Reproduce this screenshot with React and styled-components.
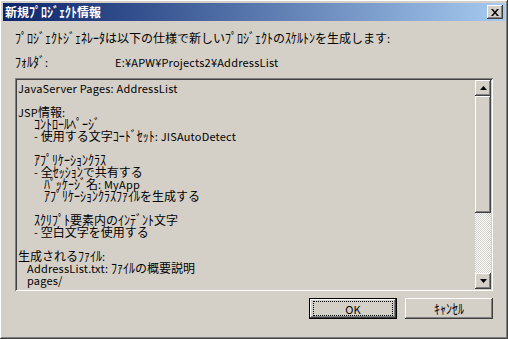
import React from 'react';
import styled, { createGlobalStyle } from 'styled-components';

const GlobalStyle = createGlobalStyle`
  html, body {
    margin: 0;
    padding: 0;
    background: #d4d0c8;
  }
  body {
    font-family: "Noto Sans CJK JP", sans-serif;
    font-size: 12px;
  }
`;

const lines = [
  { text: 'JavaServer Pages: AddressList', indent: 0 },
  { text: '', indent: 0 },
  { text: 'JSP情報:', indent: 0 },
  { text: 'ｺﾝﾄﾛｰﾙﾍﾟｰｼﾞ', indent: 16 },
  { text: '- 使用する文字ｺｰﾄﾞｾｯﾄ: JISAutoDetect', indent: 16 },
  { text: '', indent: 0 },
  { text: 'ｱﾌﾟﾘｹｰｼｮﾝｸﾗｽ', indent: 16 },
  { text: '- 全ｾｯｼｮﾝで共有する', indent: 16 },
  { text: 'ﾊﾟｯｹｰｼﾞ名: MyApp', indent: 26 },
  { text: 'ｱﾌﾟﾘｹｰｼｮﾝｸﾗｽﾌｧｲﾙを生成する', indent: 26 },
  { text: '', indent: 0 },
  { text: 'ｽｸﾘﾌﾟﾄ要素内のｲﾝﾃﾞﾝﾄ文字', indent: 16 },
  { text: '- 空白文字を使用する', indent: 16 },
  { text: '', indent: 0 },
  { text: '生成されるﾌｧｲﾙ:', indent: 0 },
  { text: 'AddressList.txt: ﾌｧｲﾙの概要説明', indent: 9 },
  { text: 'pages/', indent: 9 },
];

// latin runs get the narrower size of the old UI font, half-width kana a little taller
const Txt = ({ children }) => {
  const parts = String(children).split(/([\uFF61-\uFF9F]+|[\x20-\x7E\u00A5]+)/).filter(Boolean);
  return parts.map((p, i) => {
    if (/^[\uFF61-\uFF9F]/.test(p)) return <Kana key={i}>{p}</Kana>;
    if (/^[\x20-\x7E\u00A5]/.test(p)) return <Latin key={i}>{p}</Latin>;
    return <span key={i}>{p}</span>;
  });
};

const App = () => {
  return (
    <>
      <GlobalStyle />
      <Window>
        <TitleBar>
          <Title><Txt>新規ﾌﾟﾛｼﾞｪｸﾄ情報</Txt></Title>
          <CloseButton>
            <svg width="8" height="7" viewBox="0 0 8 7">
              <path d="M0 0h2l2 2.5L6 0h2L5 3.5 8 7H6L4 4.5 2 7H0l3-3.5z" fill="#000" />
            </svg>
          </CloseButton>
        </TitleBar>
        <Body>
          <Intro><Txt>ﾌﾟﾛｼﾞｪｸﾄｼﾞｪﾈﾚｰﾀは以下の仕様で新しいﾌﾟﾛｼﾞｪｸﾄのｽｹﾙﾄﾝを生成します:</Txt></Intro>
          <FolderRow>
            <FolderLabel><Txt>ﾌｫﾙﾀﾞ:</Txt></FolderLabel>
            <span><Txt>E:¥APW¥Projects2¥AddressList</Txt></span>
          </FolderRow>
          <Summary>
            <SummaryText>
              {lines.map((l, i) => (
                <Line key={i} $indent={l.indent}><Txt>{l.text}</Txt></Line>
              ))}
            </SummaryText>
            <ScrollBar>
              <ArrowButton>
                <svg width="7" height="4" viewBox="0 0 7 4"><path d="M3.5 0L7 4H0z" fill="#000" /></svg>
              </ArrowButton>
              <Thumb />
              <Track />
              <ArrowButton>
                <svg width="7" height="4" viewBox="0 0 7 4"><path d="M0 0h7L3.5 4z" fill="#000" /></svg>
              </ArrowButton>
            </ScrollBar>
          </Summary>
          <ButtonRow>
            <Button $default>
              <Focus><Txt>OK</Txt></Focus>
            </Button>
            <Button><Txt>ｷｬﾝｾﾙ</Txt></Button>
          </ButtonRow>
        </Body>
      </Window>
    </>
  );
};

const raised = `
  box-shadow:
    inset -1px -1px #404040,
    inset 1px 1px #ffffff,
    inset -2px -2px #808080,
    inset 2px 2px #d4d0c8;
`;

const Kana = styled.span`
  display: inline-block;
  white-space: nowrap;
  transform: scaleY(1.15);
  transform-origin: center 80%;
`;

const Latin = styled.span`
  font-size: 11px;
  letter-spacing: 0.2px;
  white-space: pre;
`;

const Window = styled.div`
  width: 508px;
  height: 339px;
  box-sizing: border-box;
  padding: 3px;
  background: #d4d0c8;
  display: flex;
  flex-direction: column;
  ${raised}
`;

const TitleBar = styled.div`
  height: 18px;
  display: flex;
  align-items: center;
  justify-content: space-between;
  padding: 0 2px 0 2px;
  background: linear-gradient(to right, #0a246a, #a6caf0);
`;

const Title = styled.span`
  color: #ffffff;
  font-weight: bold;
  font-size: 12px;
  line-height: 14px;
  white-space: nowrap;
`;

const CloseButton = styled.div`
  width: 16px;
  height: 14px;
  background: #d4d0c8;
  display: flex;
  align-items: center;
  justify-content: center;
  ${raised}
`;

const Body = styled.div`
  flex: 1;
  display: flex;
  flex-direction: column;
  padding: 11px 12px 0 12px;
  color: #000;
`;

const Intro = styled.div`
  height: 12px;
  line-height: 12px;
  white-space: nowrap;
`;

const FolderRow = styled.div`
  display: flex;
  margin-top: 12px;
  height: 12px;
  line-height: 12px;
  white-space: nowrap;
`;

const FolderLabel = styled.span`
  width: 100px;
`;

const Summary = styled.div`
  margin-top: 10px;
  height: 213px;
  box-sizing: border-box;
  padding: 2px;
  display: flex;
  box-shadow:
    inset 1px 1px #808080,
    inset -1px -1px #ffffff,
    inset 2px 2px #404040,
    inset -2px -2px #d4d0c8;
`;

const SummaryText = styled.div`
  flex: 1;
  padding: 2px 0 0 1px;
`;

const Line = styled.div`
  height: 12px;
  line-height: 12px;
  white-space: nowrap;
  padding-left: ${(p) => p.$indent}px;
`;

const ScrollBar = styled.div`
  width: 16px;
  display: flex;
  flex-direction: column;
`;

const ArrowButton = styled.div`
  width: 16px;
  height: 16px;
  flex-shrink: 0;
  background: #d4d0c8;
  display: flex;
  align-items: center;
  justify-content: center;
  ${raised}
`;

const Thumb = styled.div`
  height: 117px;
  flex-shrink: 0;
  background: #d4d0c8;
  ${raised}
`;

const Track = styled.div`
  flex: 1;
  background-color: #d4d0c8;
  background-image: repeating-conic-gradient(#ffffff 0 25%, #d4d0c8 0 50%);
  background-size: 2px 2px;
`;

const ButtonRow = styled.div`
  display: flex;
  justify-content: flex-end;
  gap: 8px;
  margin-top: 7px;
`;

const Button = styled.div`
  width: 88px;
  height: 21px;
  box-sizing: border-box;
  background: #d4d0c8;
  display: flex;
  align-items: center;
  justify-content: center;
  line-height: 13px;
  white-space: nowrap;
  ${(p) =>
    p.$default
      ? `
  box-shadow:
    inset 0 0 0 1px #000000,
    inset -2px -2px #404040,
    inset 2px 2px #ffffff,
    inset -3px -3px #808080;
  `
      : raised}
`;

const Focus = styled.div`
  width: 78px;
  height: 13px;
  line-height: 13px;
  border: 1px dotted #000;
  text-align: center;
`;

export default App;
